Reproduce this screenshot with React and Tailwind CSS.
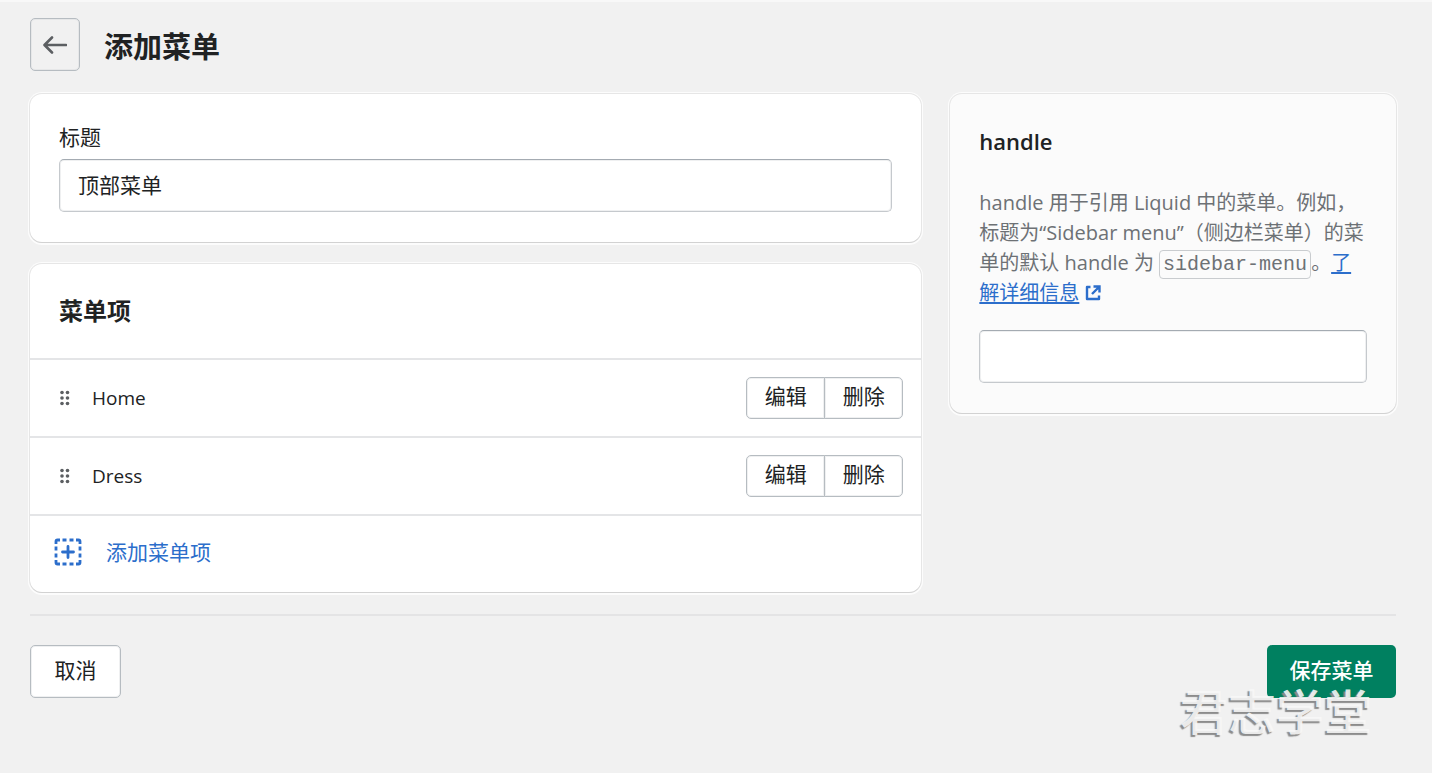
import React, { useState } from "react"

const menuItems = [
  { id: 1, name: "Home" },
  { id: 2, name: "Dress" },
]

const cardClass =
  "rounded-xl shadow-[0_1px_0_0_#d2d2d2,0_0_0_1px_#e6e6e6,0_0_0_2px_#fcfcfc,0_1px_0_2px_#fcfcfc]"

const inputClass =
  "block w-full h-[53px] rounded-[5px] border border-[#c5c9cd] border-t-[#a4abb2] bg-white px-[18px] pb-1 text-[21px] shadow-[inset_0_0_0_1px_#eff0f1] outline-none focus:border-[#2c6ecb]"

const buttonClass =
  "border border-[#b6bcc1] bg-white text-[21px] leading-none whitespace-nowrap shadow-[inset_0_0_0_1px_#eff0f1]"

function DragHandle() {
  return (
    <svg className="w-3 h-4" viewBox="0 0 12 16" fill="#5c5f62">
      <circle cx="3" cy="2.5" r="1.8" />
      <circle cx="8.5" cy="2.5" r="1.8" />
      <circle cx="3" cy="8" r="1.8" />
      <circle cx="8.5" cy="8" r="1.8" />
      <circle cx="3" cy="13.5" r="1.8" />
      <circle cx="8.5" cy="13.5" r="1.8" />
    </svg>
  )
}

function MenuItemRow({ name }) {
  return (
    <li className="flex items-center justify-between h-[78px] pl-[29px] pr-[18px] border-t-2 border-[#e4e5e7]">
      <div className="flex items-center gap-[21px]">
        <DragHandle />
        <span className="text-[19px]">{name}</span>
      </div>
      <div className="flex">
        <button type="button" className={`${buttonClass} w-[79px] h-[42px] pb-1 rounded-l-[5px]`}>
          编辑
        </button>
        <button type="button" className={`${buttonClass} w-[79px] h-[42px] pb-1 rounded-r-[5px] -ml-px`}>
          删除
        </button>
      </div>
    </li>
  )
}

export default function App() {
  const [title, setTitle] = useState("顶部菜单")
  const [handle, setHandle] = useState("")

  return (
    <div className="relative min-h-screen bg-[#f1f1f1] border-t-2 border-[#f8f8f8] pt-4 pl-[30px] pr-9 text-[#202223] font-['Open_Sans','Noto_Sans_CJK_SC',sans-serif] [text-spacing-trim:space-all]">
      <header className="flex items-center gap-6">
        <button
          type="button"
          aria-label="返回"
          className="flex items-center justify-center w-[50px] h-[53px] rounded-[5px] border border-[#b6bcc1] shadow-[inset_0_0_0_1px_#e6e7e8]"
        >
          <svg className="w-6 h-5" viewBox="0 0 24 20" fill="none" stroke="#5c5f62" strokeWidth="2.6" strokeLinecap="round" strokeLinejoin="round">
            <path d="M23 10H2M9 2.5L1.5 10L9 17.5" />
          </svg>
        </button>
        <h1 className="pt-1 text-[29px] leading-9 font-bold">添加菜单</h1>
      </header>

      <div className="mt-[23px] grid grid-cols-[2fr_1fr] gap-[29px] items-start">
        <main className="flex flex-col gap-[22px]">
          <section className={`${cardClass} bg-white px-[29px] pt-[30px] pb-[30px]`}>
            <label htmlFor="menu-title" className="block text-[21px] leading-[27px] mb-2">
              标题
            </label>
            <input
              id="menu-title"
              type="text"
              value={title}
              onChange={(e) => setTitle(e.target.value)}
              className={inputClass}
            />
          </section>

          <section className={`${cardClass} bg-white`}>
            <h2 className="px-[29px] py-[30px] text-[24px] leading-[34px] font-semibold">菜单项</h2>
            <ul>
              {menuItems.map((item) => (
                <MenuItemRow key={item.id} name={item.name} />
              ))}
            </ul>
            <div className="flex items-center h-[78px] pl-6 pb-1 border-t-2 border-[#e4e5e7]">
              <button type="button" className="flex items-center gap-6 text-[21px] leading-[30px] text-[#2c6ecb]">
                <svg className="w-7 h-7" viewBox="0 0 28 28" fill="none" stroke="#2c6ecb" strokeWidth="2.8">
                  <path d="M2 6V3.5Q2 2 3.5 2H6M22 2h2.500Q26 2 26 3.500V6M26 22v2.500Q26 26 24.500 26H22M6 26H3.500Q2 26 2 24.500V22" />
                  <path d="M8.500 2h4M15.500 2h4M8.500 26h4M15.500 26h4M2 8.500v4M2 15.500v4M26 8.500v4M26 15.500v4" />
                  <path d="M14 8.500v11M8.500 14h11" strokeLinecap="round" strokeWidth="2.8" />
                </svg>
                添加菜单项
              </button>
            </div>
          </section>
        </main>

        <aside className={`${cardClass} bg-[#fbfbfb] px-[29px] py-[30px]`}>
          <h2 id="handle-heading" className="text-[22px] leading-[34px] font-semibold">handle</h2>
          <p className="mt-[30px] text-[20px] leading-[30px] text-[#6d7175]">
            handle 用于引用 Liquid 中的菜单。例如，标题为“Sidebar menu”（侧边栏菜单）的菜单的默认 handle 为{" "}
            <code className="rounded-[4px] border border-[#c9cccf] px-[3px] py-0.5 text-[20px] leading-none font-['Liberation_Mono',monospace]">sidebar-menu</code>
            。
            <a href="#handle" className="text-[#2c6ecb] underline underline-offset-2">
              了解详细信息
            </a>
            <svg className="inline-block w-4 h-4 ml-1.5 -mt-1" viewBox="0 0 16 16" fill="none" stroke="#2c6ecb" strokeWidth="2.4">
              <path d="M5.500 2H2V14H14V10.500" strokeLinejoin="round" />
              <path d="M8.500 1.500H14.500V7.500M14.500 1.500L7 9" />
            </svg>
          </p>
          <input
            type="text"
            aria-labelledby="handle-heading"
            value={handle}
            onChange={(e) => setHandle(e.target.value)}
            className={`${inputClass} mt-[22px]`}
          />
        </aside>
      </div>

      <footer className="mt-[22px] flex items-center justify-between border-t-2 border-[#e4e4e5] pt-[29px]">
        <button type="button" className={`${buttonClass} w-[91px] h-[53px] pb-0.5 rounded-[5px]`}>
          取消
        </button>
        <div className="relative">
          <button
            type="button"
            className="w-[129px] h-[53px] pb-0.5 rounded-[5px] bg-[#008060] text-white text-[21px] leading-none font-medium"
          >
            保存菜单
          </button>
          <span className="absolute right-6 top-[37px] text-[48px] leading-[60px] font-medium whitespace-nowrap pointer-events-none text-[#f8f8f8]/90 [text-shadow:-2px_2px_1px_#8c8c8c]">
            君志学堂
          </span>
        </div>
      </footer>
    </div>
  )
}
